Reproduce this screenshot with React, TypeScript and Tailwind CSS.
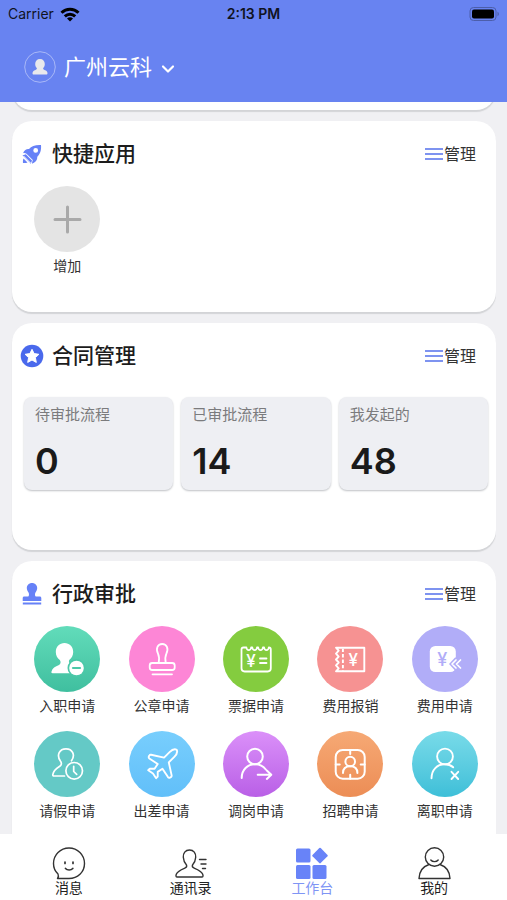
import type { ReactNode } from "react";
import { ChevronDown } from "lucide-react";

const YEN = { fontFamily: "Inter", fontWeight: 500, textAnchor: "middle" as const };

type AppItem = { label: string; bg: string; icon: ReactNode };

const APPROVALS: AppItem[] = [
  {
    label: "入职申请",
    bg: "bg-linear-to-b from-[#62dcba] to-[#3fbf9f]",
    icon: (
      <>
        <path
          fill="#fff"
          d="M30.500 17c5 0 8.700 3.800 8.700 8.900 0 3.600-1.700 6.100-4 8.100-.8 2 0 3.400 1.800 4.200l1 9H18.500c-1 0-1.300-.8-1-1.700.8-3.300 3.700-5 7.500-6.500 1.900-.8 2-3.400.8-5-2.400-2-4-4.500-4-8.100C21.800 20.800 25.500 17 30.500 17Z"
        />
        <circle cx="42.500" cy="42" r="9" fill="#4ac8a8" />
        <circle cx="42.500" cy="42" r="7.300" fill="#fff" />
        <path stroke="#4ac8a8" strokeWidth="2.200" strokeLinecap="round" d="M39 42h7" />
      </>
    ),
  },
  {
    label: "公章申请",
    bg: "bg-[#fd86d6]",
    icon: (
      <g stroke="#fff" strokeWidth="1.800" strokeLinejoin="round" strokeLinecap="round">
        <path d="M29.700 36.700c.7-4 .5-6.500-.7-9-2.500-5-.3-9.700 4.200-9.700s6.700 4.700 4.200 9.700c-1.200 2.500-1.400 5-.7 9" />
        <rect x="20.700" y="37" width="25" height="7" rx="2.500" />
        <path d="M23.500 48.300h19.500" />
      </g>
    ),
  },
  {
    label: "票据申请",
    bg: "bg-[#84cc3f]",
    icon: (
      <>
        <g stroke="#fff" strokeWidth="1.800" strokeLinejoin="round" strokeLinecap="round">
          <path d="M20.500 21.500c-1.300 0-2 .8-2 2v18.800c0 1.900 1.200 3.200 3.100 3.200h23.100c1.900 0 3.100-1.300 3.100-3.200V23.500c0-1.200-.7-2-2-2-.5 3.600-4.200 3.600-4.700 0h-1.200c-.5 3.600-4.200 3.600-4.700 0H34c-.5 3.600-4.200 3.600-4.700 0h-1.200c-.5 3.600-4.200 3.600-4.700 0Z" />
          <path d="M37 32.500h6.500M37 37h6.500" />
        </g>
        <text x="28" y="40.500" fontSize="17" fill="#fff" style={YEN}>¥</text>
      </>
    ),
  },
  {
    label: "费用报销",
    bg: "bg-[#f69292]",
    icon: (
      <>
        <g stroke="#fff" strokeWidth="1.900" strokeLinejoin="round">
          <path d="M19 21.700h28.300v23.600H19l2.700-2.900-2.700-3 2.700-2.900-2.700-3 2.700-2.900-2.700-3 2.700-2.900Z" />
          <path strokeDasharray="3.400 2" d="M25.900 22.700v22" />
        </g>
        <text x="36.200" y="39.500" fontSize="17" fill="#fff" style={YEN}>¥</text>
      </>
    ),
  },
  {
    label: "费用申请",
    bg: "bg-[#b1adf8]",
    icon: (
      <>
        <rect x="17.800" y="20" width="26" height="26" rx="5.500" fill="#fff" />
        <path fill="#b1adf8" d="M37 38l6-6.500h7v13h-7Z" />
        <text x="30.300" y="39.500" fontSize="18" fill="#b1adf8" style={YEN}>¥</text>
        <path stroke="#fff" strokeWidth="1.700" strokeLinecap="round" strokeLinejoin="round" d="M44 34l-4 4 4 4M48.500 34l-4 4 4 4" />
      </>
    ),
  },
  {
    label: "请假申请",
    bg: "bg-[#64c9c6]",
    icon: (
      <g stroke="#fff" strokeWidth="1.700" strokeLinecap="round" strokeLinejoin="round">
        <path d="M37.500 29.800c4.100-5.800 1-12-5.500-12s-9.800 6.200-5.600 12.200c1.500 2 1.300 4.200-1 5.600-3.200 2-6 4.600-6.600 8.100-.1.800.3 1.300 1.200 1.300h10.500" />
        <circle cx="40.200" cy="39.800" r="8.300" />
        <path d="M39.700 35.300v5.200l3 2.800" />
      </g>
    ),
  },
  {
    label: "出差申请",
    bg: "bg-linear-to-b from-[#78cefd] to-[#61bff9]",
    icon: (
      <path
        transform="translate(14.500 14) scale(1.580)"
        stroke="#fff"
        strokeWidth="1.200"
        strokeLinejoin="round"
        d="M17.800 19.200 16 11l3.500-3.500C21 6 21.500 4 21 3c-1-.5-3 0-4.500 1.500L13 8 4.800 6.200c-.5-.1-.9.1-1.100.5l-.3.5c-.2.5-.1 1 .3 1.300L9 12l-2 3H4l-1 1 3 2 2 3 1-1v-3l3-2 3.500 5.300c.3.4.8.5 1.300.3l.5-.2c.4-.3.6-.7.5-1.200z"
      />
    ),
  },
  {
    label: "调岗申请",
    bg: "bg-linear-to-b from-[#db90f9] to-[#b95fe6]",
    icon: (
      <g stroke="#fff" strokeWidth="2" strokeLinecap="round" strokeLinejoin="round">
        <circle cx="32" cy="25.500" r="7.800" />
        <path d="M18.700 47c0-8.300 5.800-13.700 13.300-13.700 4.700 0 8.500 2 10.800 5.200" />
        <path d="M34.700 43.700h13.400M43.800 39.500l4.500 4.200-4.500 4.200" />
      </g>
    ),
  },
  {
    label: "招聘申请",
    bg: "bg-linear-to-b from-[#f6a975] to-[#ec8d55]",
    icon: (
      <g stroke="#fff" strokeWidth="2" strokeLinecap="round">
        <rect x="18.700" y="19" width="29" height="28.700" rx="7" />
        <path d="M33.200 19v4M33.200 43.700v4M18.700 33.400h4M43.700 33.400h4" />
        <circle cx="33.200" cy="30.500" r="4.800" />
        <path d="M26 42c0-4.400 3-6.700 7.200-6.700s7.200 2.300 7.200 6.700" />
      </g>
    ),
  },
  {
    label: "离职申请",
    bg: "bg-linear-to-b from-[#78dbe9] to-[#3dbfd8]",
    icon: (
      <g stroke="#fff" strokeWidth="1.900" strokeLinecap="round">
        <circle cx="33" cy="25.500" r="7.900" />
        <path d="M19.500 47.300c0-8.600 5.700-14 13.200-14 3.500 0 6.300 1 8.500 3" />
        <path d="M39.500 40.800l6.700 7.200M46.200 40.800L39.500 48" />
      </g>
    ),
  },
];

const STATS = [
  { label: "待审批流程", value: 0 },
  { label: "已审批流程", value: 14 },
  { label: "我发起的", value: 48 },
];

const TABS = [
  {
    label: "消息",
    active: false,
    icon: (
      <g stroke="#333" strokeWidth="1.400" strokeLinecap="round" strokeLinejoin="round">
        <path d="M6 28c-3-2.800-4.500-6.500-4.500-10.500C1.500 8.800 8.400 2 17 2s15.500 6.800 15.500 15.500S25.600 32.500 17 32.500H5.500c1-1.200 1.200-2.800.5-4.500Z" />
        <path strokeWidth="1.700" d="M13 16v1.500M21 16v1.500M13.500 22.500c1.800 2 5.500 2 7.300 0" />
      </g>
    ),
  },
  {
    label: "通讯录",
    active: false,
    icon: (
      <g stroke="#333" strokeWidth="1.400" strokeLinecap="round" strokeLinejoin="round">
        <path d="M15.500 4c-4.200 0-6.500 3.200-6.200 7.300.2 3.700 1.600 6 3.200 7.700.6 1.600 0 2.500-1.700 3.200-3.600 1.500-7 2.800-8.400 5.800-.6 1.400-.7 3 .5 3h25.200c1.200 0 1.100-1.600.5-3-1.400-3-4.800-4.300-8.400-5.800-1.700-.7-2.300-1.600-1.700-3.200 1.600-1.700 3-4 3.200-7.700.3-4.100-2-7.300-6.200-7.300Z" />
        <path d="M25.500 13.500H32M27 18h5M28.500 22.500h3" />
      </g>
    ),
  },
  {
    label: "工作台",
    active: true,
    icon: (
      <g fill="#6883f8">
        <rect x="1" y="2.500" width="14.500" height="14" rx="1.500" />
        <rect x="1" y="19" width="14.500" height="14" rx="1.500" />
        <rect x="17.500" y="19" width="14" height="14" rx="1.500" />
        <rect x="19.200" y="3.800" width="11.600" height="11.600" rx="1" transform="rotate(45 25 9.600)" />
      </g>
    ),
  },
  {
    label: "我的",
    active: false,
    icon: (
      <g stroke="#333" strokeWidth="1.400" strokeLinecap="round" strokeLinejoin="round">
        <circle cx="17.500" cy="11" r="9.200" />
        <path d="M13.800 14c1.800 2.200 5.600 2.200 7.400 0M12 18.500C6 20.500 2.300 25.500 2 32.500h31c-.3-7-4-12-10-14" />
      </g>
    ),
  },
];

const RocketIcon = () => (
  <svg viewBox="0 0 24 24" className="h-6 w-6" fill="#6681f7">
    <path
      fillRule="evenodd"
      d="M21 3c-5.500-.3-9.500 1-12 4-2.500-.3-4.500 1-6 4.200 1.500-.2 2.700 0 3.500.5l6.300 6.300c-.5 1.300-.8 2.500-.8 3.700 3.500-1.500 5.500-3.700 5.300-7C20 12 21.500 8.500 21 3Zm-5.300 7.800a2.400 2.400 0 1 1 0-4.800 2.400 2.400 0 0 1 0 4.800Z"
    />
    <path d="M5.800 12.300 12 18.500l-1.200 3.200-8.300-8.300Z" />
    <path d="M3.500 16.500c-.6 1.400-.7 2.800-.5 4.500 1.700.2 3.100.1 4.500-.5Z" />
    <path stroke="#fff" strokeWidth="1" d="M3.500 14l7 7" />
  </svg>
);

const StarIcon = () => (
  <svg viewBox="0 0 24 24" className="h-6 w-6">
    <circle cx="12" cy="12" r="11.300" fill="#4a69ec" />
    <path
      fill="#fff"
      stroke="#fff"
      strokeLinejoin="round"
      d="m12 5.300 2.100 4.300 4.800.7-3.500 3.300.9 4.800-4.300-2.400-4.300 2.400.9-4.800-3.500-3.300 4.800-.7Z"
    />
  </svg>
);

const StampIcon = () => (
  <svg viewBox="0 0 24 24" className="h-6 w-6" fill="#6681f7">
    <path d="M12 1c3 0 5.200 2.200 5.200 5 0 2-.9 3.200-1.700 4.500-.7 1.200-.7 3.500.2 4h4c1 0 1.600.6 1.600 1.600v2.900H2.700v-2.900c0-1 .6-1.600 1.600-1.600h4c.9-.5.900-2.800.2-4C7.700 9.200 6.800 8 6.800 6c0-2.800 2.200-5 5.200-5Z" />
    <rect x="2.800" y="20.500" width="18.400" height="2" />
  </svg>
);

function Card({ icon, title, children }: { icon: ReactNode; title: string; children: ReactNode }) {
  return (
    <section className="rounded-[20px] bg-white shadow-[0_2px_1px_#d3d4d7]">
      <div className="flex h-[65px] items-center justify-between pr-5 pl-2">
        <h2 className="flex items-center gap-2 text-[21px] font-medium text-[#1c1c1c]">
          {icon}
          {title}
        </h2>
        <button className="flex items-center gap-px text-base text-[#333]">
          <svg viewBox="0 0 18 14" className="h-3.5 w-[18px]" stroke="#7e93f0" strokeWidth="2">
            <path d="M0 2h18M0 7h18M0 12h18" />
          </svg>
          管理
        </button>
      </div>
      {children}
    </section>
  );
}

function AppButton({ label, bg, icon }: AppItem) {
  return (
    <button className="flex flex-col items-center gap-1">
      <span className={`block size-[66px] rounded-full ${bg}`}>
        <svg viewBox="0 0 66 66" className="size-full" fill="none">
          {icon}
        </svg>
      </span>
      <span className="text-sm leading-5 text-[#333]">{label}</span>
    </button>
  );
}

export default function App() {
  return (
    <div className="flex h-screen flex-col bg-[#f0f0f3] font-[Inter,'Noto_Sans_CJK_SC',sans-serif]">
      <header className="h-[102px] shrink-0 bg-[#6883f1]">
        <div className="grid h-7 grid-cols-3 items-center px-2 text-sm text-[#10131f]">
          <div className="flex items-center gap-1.5">
            Carrier
            <svg viewBox="0 0 20 15" className="h-[15px] w-5" fill="none" stroke="#000" strokeWidth="3">
              <path d="M1.500 5.800c4.800-4.700 12.200-4.700 17 0M4.800 9.300c3-2.900 7.400-2.900 10.400 0" />
              <path fill="#000" stroke="none" d="M10 14.500l-3-3c1.700-1.600 4.300-1.600 6 0Z" />
            </svg>
          </div>
          <div className="text-center font-semibold">2:13 PM</div>
          <svg viewBox="0 0 30 14" className="h-3.5 w-[30px] justify-self-end">
            <rect x="1" y=".5" width="26" height="13" rx="3.500" fill="none" stroke="#4c5eaa" />
            <rect x="3" y="2.500" width="22" height="9" rx="2" />
            <path fill="#4c5eaa" d="M28.500 4.800c1.800.7 1.800 3.700 0 4.400Z" />
          </svg>
        </div>
        <div className="flex h-[78px] items-center px-6">
          <button className="flex items-center text-[22px] text-white">
            <svg viewBox="0 0 32 32" className="mr-2 h-8 w-8">
              <circle cx="16" cy="16" r="15.300" fill="none" stroke="#a9b8f7" />
              <path
                fill="#e9e9ec"
                d="M16 8c3 0 4.800 2 4.800 5 0 1.800-.5 3-1.600 4.100-.2 1 .3 1.500 1.300 1.900 2 .7 3 1.700 3 3.300 0 .8-.4 1.200-1.200 1.200H9.700c-.8 0-1.200-.4-1.200-1.200 0-1.600 1-2.600 3-3.300 1-.4 1.500-.9 1.300-1.900-1.100-1.100-1.600-2.300-1.600-4.100 0-3 1.800-5 4.800-5Z"
              />
            </svg>
            广州云科
            <ChevronDown className="mt-1 ml-1.5 size-5" strokeWidth={2.600} />
          </button>
        </div>
      </header>

      <main className="mr-[11px] flex min-h-0 flex-1 flex-col gap-[11px] overflow-hidden pl-3 *:shrink-0">
        {/* previous card, scrolled up under the header */}
        <section className="-mt-[72px] h-20 rounded-[20px] bg-white shadow-[0_2px_1px_#d3d4d7]" />

        <Card icon={<RocketIcon />} title="快捷应用">
          <div className="grid grid-cols-5 pr-1 pb-9 pl-2">
            <AppButton
              label="增加"
              bg="bg-[#e4e4e4]"
              icon={<path stroke="#a9a9a9" strokeWidth="3" strokeLinecap="round" d="M21 33.500h25M33.500 21v25" />}
            />
          </div>
        </Card>

        <Card icon={<StarIcon />} title="合同管理">
          <div className="grid grid-cols-3 gap-2 pt-[9px] pr-2 pb-[60px] pl-3">
            {STATS.map((s) => (
              <div key={s.label} className="h-[93px] rounded-lg bg-[#eeeff3] px-[11px] pt-2 shadow-[0_1px_2px_#bfc1c5]">
                <div className="text-[15px] leading-5 text-[#7b7b7d]">{s.label}</div>
                <div className="mt-4 text-4xl font-semibold text-[#1a1a1a]">{s.value}</div>
              </div>
            ))}
          </div>
        </Card>

        <Card icon={<StampIcon />} title="行政审批">
          <div className="grid grid-cols-5 gap-y-[15px] pr-1 pb-9 pl-2">
            {APPROVALS.map((a) => (
              <AppButton key={a.label} {...a} />
            ))}
          </div>
        </Card>
      </main>

      <nav className="grid h-[66px] shrink-0 grid-cols-4 bg-white pr-3 pl-2">
        {TABS.map((t) => (
          <a
            key={t.label}
            href="#"
            className={`flex flex-col items-center pt-3 text-sm leading-4 ${t.active ? "text-[#7f95f5]" : "text-[#222]"}`}
          >
            <svg viewBox="0 0 34 34" className="size-[34px]" fill="none">
              {t.icon}
            </svg>
            {t.label}
          </a>
        ))}
      </nav>
    </div>
  );
}
